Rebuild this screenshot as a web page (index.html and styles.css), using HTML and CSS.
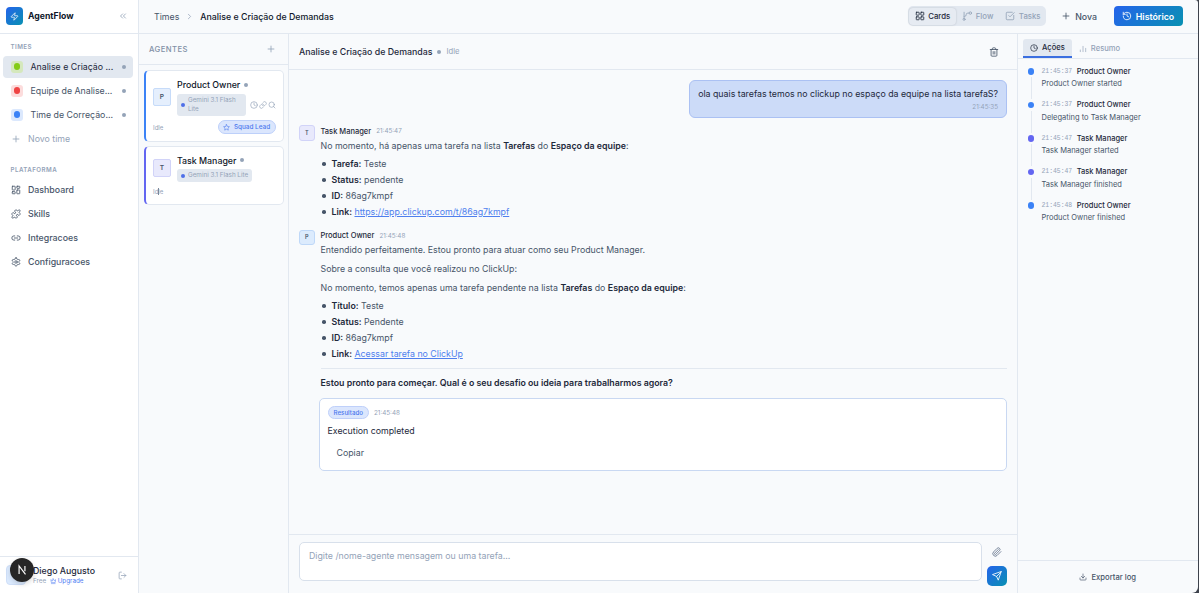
FILE: index.html
```html
<!DOCTYPE html>
<html lang="pt-BR">
	<head>
		<meta charset="UTF-8">
		<meta name="viewport" content="width=device-width, initial-scale=1">
		<title>AgentFlow</title>
		<link rel="stylesheet" href="styles.css">
	</head>
	<body>
		<svg class="sprite">
			<symbol id="i-zap" viewBox="0 0 24 24"><path d="M4 14a1 1 0 0 1-.78-1.63l9.9-10.2a.5.5 0 0 1 .86.46l-1.92 6.02A1 1 0 0 0 13 10h7a1 1 0 0 1 .78 1.63l-9.9 10.2a.5.5 0 0 1-.86-.46l1.92-6.02A1 1 0 0 0 11 14z"/></symbol>
			<symbol id="i-left" viewBox="0 0 24 24"><path d="m11 17-5-5 5-5M18 17l-5-5 5-5"/></symbol>
			<symbol id="i-right" viewBox="0 0 24 24"><path d="m9 18 6-6-6-6"/></symbol>
			<symbol id="i-plus" viewBox="0 0 24 24"><path d="M5 12h14M12 5v14"/></symbol>
			<symbol id="i-dash" viewBox="0 0 24 24"><rect x="3" y="3" width="7" height="9" rx="1"/><rect x="14" y="3" width="7" height="5" rx="1"/><rect x="14" y="12" width="7" height="9" rx="1"/><rect x="3" y="16" width="7" height="5" rx="1"/></symbol>
			<symbol id="i-grid" viewBox="0 0 24 24"><rect x="3" y="3" width="7" height="7" rx="1"/><rect x="14" y="3" width="7" height="7" rx="1"/><rect x="14" y="14" width="7" height="7" rx="1"/><rect x="3" y="14" width="7" height="7" rx="1"/></symbol>
			<symbol id="i-puzzle" viewBox="0 0 24 24"><path d="M15.39 4.39a1 1 0 0 0 1.68-.474 2.5 2.5 0 1 1 3.014 3.015 1 1 0 0 0-.474 1.68l1.683 1.682a2.414 2.414 0 0 1 0 3.414L19.61 15.39a1 1 0 0 1-1.68-.474 2.5 2.5 0 1 0-3.014 3.015 1 1 0 0 1 .474 1.68l-1.683 1.682a2.414 2.414 0 0 1-3.414 0L8.61 19.61a1 1 0 0 0-1.68.474 2.5 2.5 0 1 1-3.014-3.015 1 1 0 0 0 .474-1.68l-1.683-1.682a2.414 2.414 0 0 1 0-3.414L4.39 8.61a1 1 0 0 1 1.68.474 2.5 2.5 0 1 0 3.014-3.015 1 1 0 0 1-.474-1.68l1.683-1.682a2.414 2.414 0 0 1 3.414 0z"/></symbol>
			<symbol id="i-link2" viewBox="0 0 24 24"><path d="M9 17H7A5 5 0 0 1 7 7h2M15 7h2a5 5 0 1 1 0 10h-2M8 12h8"/></symbol>
			<symbol id="i-link" viewBox="0 0 24 24"><path d="M10 13a5 5 0 0 0 7.54.54l3-3a5 5 0 0 0-7.07-7.07l-1.72 1.71"/><path d="M14 11a5 5 0 0 0-7.54-.54l-3 3a5 5 0 0 0 7.07 7.07l1.71-1.71"/></symbol>
			<symbol id="i-gear" viewBox="0 0 24 24"><path d="M12.22 2h-.44a2 2 0 0 0-2 2v.18a2 2 0 0 1-1 1.73l-.43.25a2 2 0 0 1-2 0l-.15-.08a2 2 0 0 0-2.73.73l-.22.38a2 2 0 0 0 .73 2.73l.15.1a2 2 0 0 1 1 1.72v.51a2 2 0 0 1-1 1.74l-.15.09a2 2 0 0 0-.73 2.73l.22.38a2 2 0 0 0 2.73.73l.15-.08a2 2 0 0 1 2 0l.43.25a2 2 0 0 1 1 1.73V20a2 2 0 0 0 2 2h.44a2 2 0 0 0 2-2v-.18a2 2 0 0 1 1-1.73l.43-.25a2 2 0 0 1 2 0l.15.08a2 2 0 0 0 2.73-.73l.22-.39a2 2 0 0 0-.73-2.73l-.15-.08a2 2 0 0 1-1-1.74v-.5a2 2 0 0 1 1-1.74l.15-.09a2 2 0 0 0 .73-2.73l-.22-.38a2 2 0 0 0-2.73-.73l-.15.08a2 2 0 0 1-2 0l-.43-.25a2 2 0 0 1-1-1.73V4a2 2 0 0 0-2-2z"/><circle cx="12" cy="12" r="3"/></symbol>
			<symbol id="i-clock" viewBox="0 0 24 24"><circle cx="12" cy="12" r="10"/><path d="M12 6v6l4 2"/></symbol>
			<symbol id="i-search" viewBox="0 0 24 24"><circle cx="11" cy="11" r="8"/><path d="m21 21-4.3-4.3"/></symbol>
			<symbol id="i-star" viewBox="0 0 24 24"><path d="m12 2 3.1 6.3 6.9 1-5 4.9 1.2 6.8-6.2-3.2L5.8 21 7 14.2 2 9.3l6.9-1z"/></symbol>
			<symbol id="i-flow" viewBox="0 0 24 24"><circle cx="5" cy="20" r="2.500"/><circle cx="20" cy="5" r="3"/><path d="M5 3v14.500M17 5h-3a4 4 0 0 0-4 4 4 4 0 0 1-4 4H5"/></symbol>
			<symbol id="i-check" viewBox="0 0 24 24"><path d="M21 10.5V19a2 2 0 0 1-2 2H5a2 2 0 0 1-2-2V5a2 2 0 0 1 2-2h12.5M9 11l3 3L22 4"/></symbol>
			<symbol id="i-history" viewBox="0 0 24 24"><path d="M3 12a9 9 0 1 0 9-9 9.75 9.75 0 0 0-6.74 2.74L3 8"/><path d="M3 3v5h5M12 7v5l4 2"/></symbol>
			<symbol id="i-bars" viewBox="0 0 24 24"><path d="M4 20v-5M12 20V4M20 20V10"/></symbol>
			<symbol id="i-trash" viewBox="0 0 24 24"><path d="M3 6h18M19 6v14a2 2 0 0 1-2 2H7a2 2 0 0 1-2-2V6M8 6V4a2 2 0 0 1 2-2h4a2 2 0 0 1 2 2v2M10 11v6M14 11v6"/></symbol>
			<symbol id="i-clip" viewBox="0 0 24 24"><path d="m21.44 11.05-9.19 9.19a6 6 0 0 1-8.49-8.49l8.57-8.57A4 4 0 1 1 18 8.84l-8.59 8.57a2 2 0 0 1-2.83-2.83l8.49-8.48"/></symbol>
			<symbol id="i-send" viewBox="0 0 24 24"><path d="M22 2 15 22l-4-9-9-4zM22 2 11 13"/></symbol>
			<symbol id="i-download" viewBox="0 0 24 24"><path d="M12 15V3M21 15v4a2 2 0 0 1-2 2H5a2 2 0 0 1-2-2v-4M7 10l5 5 5-5"/></symbol>
			<symbol id="i-logout" viewBox="0 0 24 24"><path d="M9 21H5a2 2 0 0 1-2-2V5a2 2 0 0 1 2-2h4M16 17l5-5-5-5M21 12H9"/></symbol>
			<symbol id="i-crown" viewBox="0 0 24 24"><path d="M12 3l4 7 5-4-2 11H5L3 6l5 4zM5 21h14"/></symbol>
		</svg>
		<div class="app">
			<aside class="sidebar">
				<div class="brand">
					<span class="brand-logo"><svg class="icon"><use href="#i-zap"/></svg></span>
					<span class="brand-name">AgentFlow</span>
					<svg class="icon brand-fold"><use href="#i-left"/></svg>
				</div>
				<nav class="nav">
					<div class="nav-label">TIMES</div>
					<a class="team active"><span class="team-icon green"></span><span class="team-name">Analise e Criação ...</span><span class="dot"></span></a>
					<a class="team"><span class="team-icon red"></span><span class="team-name">Equipe de Analise...</span><span class="dot"></span></a>
					<a class="team"><span class="team-icon blue"></span><span class="team-name">Time de Correção...</span><span class="dot"></span></a>
					<a class="nav-item muted"><svg class="icon"><use href="#i-plus"/></svg>Novo time</a>
					<div class="nav-label second">PLATAFORMA</div>
					<a class="nav-item"><svg class="icon"><use href="#i-dash"/></svg>Dashboard</a>
					<a class="nav-item"><svg class="icon"><use href="#i-puzzle"/></svg>Skills</a>
					<a class="nav-item"><svg class="icon"><use href="#i-link2"/></svg>Integracoes</a>
					<a class="nav-item"><svg class="icon"><use href="#i-gear"/></svg>Configuracoes</a>
				</nav>
				<div class="user">
					<span class="user-avatar"></span>
					<div class="user-info">
						<div class="user-name">Diego Augusto</div>
						<div class="user-plan">Free <a class="upgrade"><svg class="icon"><use href="#i-crown"/></svg>Upgrade</a></div>
					</div>
					<svg class="icon user-exit"><use href="#i-logout"/></svg>
					<span class="dev-badge"><svg viewBox="0 0 24 24"><path d="M7 19V5l11 14.5M17 5v9"/></svg></span>
				</div>
			</aside>
			<div class="main">
				<header class="topbar">
					<span class="crumb">Times</span>
					<svg class="icon crumb-sep"><use href="#i-right"/></svg>
					<span class="crumb-current">Analise e Criação de Demandas</span>
					<div class="views">
						<button class="view active"><svg class="icon"><use href="#i-grid"/></svg>Cards</button>
						<button class="view"><svg class="icon"><use href="#i-flow"/></svg>Flow</button>
						<button class="view"><svg class="icon"><use href="#i-check"/></svg>Tasks</button>
					</div>
					<button class="btn-new"><svg class="icon"><use href="#i-plus"/></svg>Nova</button>
					<button class="btn-history"><svg class="icon"><use href="#i-history"/></svg>Histórico</button>
				</header>
				<div class="columns">
					<section class="agents">
						<div class="agents-head">AGENTES<svg class="icon"><use href="#i-plus"/></svg></div>
						<div class="agents-list">
							<article class="agent owner">
								<div class="agent-top">
									<span class="agent-avatar">P</span>
									<div class="agent-body">
										<div class="agent-name">Product Owner<span class="dot"></span></div>
										<div class="agent-meta">
											<span class="model wrap"><i></i><span>Gemini 3.1 Flash<br>Lite</span></span>
											<span class="tools"><svg class="icon"><use href="#i-clock"/></svg><svg class="icon"><use href="#i-link"/></svg><svg class="icon"><use href="#i-search"/></svg></span>
										</div>
									</div>
								</div>
								<div class="agent-foot">Idle<span class="lead"><svg class="icon"><use href="#i-star"/></svg>Squad Lead</span></div>
							</article>
							<article class="agent manager">
								<div class="agent-top">
									<span class="agent-avatar">T</span>
									<div class="agent-body">
										<div class="agent-name">Task Manager<span class="dot"></span></div>
										<div class="agent-meta"><span class="model"><i></i><span>Gemini 3.1 Flash Lite</span></span></div>
									</div>
								</div>
								<div class="agent-foot"><span class="idle">Idle<i class="caret"></i></span></div>
							</article>
						</div>
					</section>
					<section class="chat">
						<div class="chat-head">
							<span class="chat-title">Analise e Criação de Demandas</span>
							<span class="dot"></span>
							<span class="chat-status">Idle</span>
							<svg class="icon chat-trash"><use href="#i-trash"/></svg>
						</div>
						<div class="chat-body">
							<div class="bubble">
								<div class="bubble-text">ola quais tarefas temos no clickup no espaço da equipe na lista tarefaS?</div>
								<div class="bubble-time">21:45:35</div>
							</div>
							<div class="msg manager">
								<span class="msg-avatar">T</span>
								<div class="msg-body">
									<div class="msg-head">Task Manager<time>21:45:47</time></div>
									<p>No momento, há apenas uma tarefa na lista <b>Tarefas</b> do <b>Espaço da equipe</b>:</p>
									<ul>
										<li><b>Tarefa:</b> Teste</li>
										<li><b>Status:</b> pendente</li>
										<li><b>ID:</b> 86ag7kmpf</li>
										<li><b>Link:</b> <a class="link">https://app.clickup.com/t/86ag7kmpf</a></li>
									</ul>
								</div>
							</div>
							<div class="msg owner">
								<span class="msg-avatar">P</span>
								<div class="msg-body">
									<div class="msg-head">Product Owner<time>21:45:48</time></div>
									<p>Entendido perfeitamente. Estou pronto para atuar como seu Product Manager.</p>
									<p>Sobre a consulta que você realizou no ClickUp:</p>
									<p>No momento, temos apenas uma tarefa pendente na lista <b>Tarefas</b> do <b>Espaço da equipe</b>:</p>
									<ul>
										<li><b>Título:</b> Teste</li>
										<li><b>Status:</b> Pendente</li>
										<li><b>ID:</b> 86ag7kmpf</li>
										<li><b>Link:</b> <a class="link">Acessar tarefa no ClickUp</a></li>
									</ul>
									<hr>
									<p><b>Estou pronto para começar. Qual é o seu desafio ou ideia para trabalharmos agora?</b></p>
								</div>
							</div>
							<div class="result">
								<div class="result-head"><span class="result-tag">Resultado</span><time>21:45:48</time></div>
								<div class="result-text">Execution completed</div>
								<button class="result-copy">Copiar</button>
							</div>
						</div>
						<div class="composer">
							<textarea class="composer-input" placeholder="Digite /nome-agente mensagem ou uma tarefa..."></textarea>
							<div class="composer-side">
								<svg class="icon"><use href="#i-clip"/></svg>
								<button class="composer-send"><svg class="icon"><use href="#i-send"/></svg></button>
							</div>
						</div>
					</section>
					<aside class="log">
						<div class="tabs">
							<span class="tab active"><svg class="icon"><use href="#i-clock"/></svg>Ações</span>
							<span class="tab"><svg class="icon"><use href="#i-bars"/></svg>Resumo</span>
						</div>
						<div class="events">
							<div class="event"><div class="event-head"><time>21:45:37</time>Product Owner</div><div class="event-text">Product Owner started</div></div>
							<div class="event"><div class="event-head"><time>21:45:37</time>Product Owner</div><div class="event-text">Delegating to Task Manager</div></div>
							<div class="event manager"><div class="event-head"><time>21:45:47</time>Task Manager</div><div class="event-text">Task Manager started</div></div>
							<div class="event manager"><div class="event-head"><time>21:45:47</time>Task Manager</div><div class="event-text">Task Manager finished</div></div>
							<div class="event"><div class="event-head"><time>21:45:48</time>Product Owner</div><div class="event-text">Product Owner finished</div></div>
						</div>
						<button class="export"><svg class="icon"><use href="#i-download"/></svg>Exportar log</button>
					</aside>
				</div>
			</div>
		</div>
	</body>
</html>
```
FILE: styles.css
```css
*{box-sizing: border-box;}
body{margin: 0; height: 593px; overflow: hidden; background: #3d424c; font-family: Inter, "Liberation Sans", sans-serif; font-size: 8.8px; color: #475569;}
button{border: 0; background: none; padding: 0; font: inherit; color: inherit;}
p, ul{margin: 0; padding: 0;}
.sprite{display: none;}
.icon{width: 10px; height: 10px; flex: none; fill: none; stroke: currentColor; stroke-width: 2; stroke-linecap: round; stroke-linejoin: round;}
.dot{width: 4px; height: 4px; border-radius: 50%; background: #94a3b8; flex: none;}
.app{display: flex; width: 1197.5px; height: 593px; background: #f8fafc; border-radius: 0 3px 6px 0; overflow: hidden;}

/* sidebar */
.sidebar{display: flex; flex-direction: column; width: 139px; background: #fff; border-right: 1px solid #e2e8f0;}
.brand{display: flex; align-items: center; height: 34px; padding: 0 10px 1px 6px; border-bottom: 1px solid #e2e8f0;}
.brand-logo{display: flex; align-items: center; justify-content: center; width: 17px; height: 18px; border-radius: 4px; background: linear-gradient(135deg, #2563eb, #0891b2); color: #fff;}
.brand-logo .icon{width: 9px; height: 9px;}
.brand-name{flex: 1; margin-left: 5px; font-weight: 700; color: #0f172a; font-size: 8.7px;}
.brand-fold{color: #94a3b8;}
.nav{flex: 1; padding: 7.5px 5px 0 3px;}
.nav-label{height: 14px; padding-left: 7.5px; line-height: 10px; font-size: 6.2px; font-weight: 600; letter-spacing: .45px; color: #94a3b8;}
.nav-label.second{height: 14px; margin-top: 15px;}
.team{display: flex; align-items: center; height: 22px; margin-bottom: 2px; padding: 0 7px 0 8px; border-radius: 4px;}
.team.active{background: #e2e8f0; color: #1e293b;}
.team-name{flex: 1; margin-left: 7.5px; white-space: nowrap;}
.team-icon{display: flex; align-items: center; justify-content: center; width: 12px; height: 12px; border-radius: 3px;}
.team-icon::before{content: ""; width: 6.5px; height: 6.5px; border-radius: 50%; background: currentColor;}
.green{color: #84cc16; background: #d5e8bd;}
.red{color: #ef4444; background: #fcdcdc;}
.blue{color: #3b82f6; background: #dbe8fd;}
.nav-item{display: flex; align-items: center; gap: 7.5px; height: 22px; margin-bottom: 2px; padding-left: 7.5px; font-weight: 500;}
.nav-item.muted{color: #94a3b8; font-weight: 400;}
.user{position: relative; display: flex; align-items: center; height: 37px; padding: 0 11px 0 6px; border-top: 1px solid #e2e8f0;}
.user-avatar{width: 20px; height: 20px; border-radius: 4px; background: #dbeafe; border: 1px solid #cfdff8;}
.user-info{flex: 1; margin-left: 7px; padding-top: 1px;}
.user-name{font-weight: 500; color: #1e293b; line-height: 12px;}
.user-plan{display: flex; align-items: center; gap: 4px; font-size: 6.3px; line-height: 9px; color: #94a3b8;}
.upgrade{display: flex; align-items: center; gap: 1px; color: #4f7df3;}
.upgrade .icon{width: 6.5px; height: 6.5px;}
.user-exit{width: 9px; height: 9px; color: #94a3b8;}
.dev-badge{position: absolute; left: 10px; top: 1px; display: flex; width: 24px; height: 24px; border-radius: 50%; background: #262626; box-shadow: 0 2px 5px rgba(0,0,0,.15);}
.dev-badge svg{width: 14px; height: 14px; margin: auto; fill: none; stroke: #fff; stroke-width: 2;}

/* topbar */
.main{flex: 1; display: flex; flex-direction: column; min-width: 0;}
.topbar{display: flex; align-items: center; height: 34px; padding: 0 15px 1px 15px; border-bottom: 1px solid #e2e8f0;}
.crumb-sep{width: 9px; height: 9px; margin: 0 6px 0 6px; color: #94a3b8;}
.crumb-current{flex: 1; font-weight: 500; color: #0f172a;}
.views{display: flex; align-items: center; width: 138px; height: 20px; padding: 1px; border-radius: 5px; background: #e2e8f0;}
.view{display: flex; align-items: center; gap: 3.5px; height: 17px; padding: 0 6px; border-radius: 4px; color: #94a3b8; font-size: 7.8px; font-weight: 500;}
.view.active{background: #e6ebf2; color: #1e293b; box-shadow: 0 0 2px rgba(15,23,42,.2);}
.btn-new{display: flex; align-items: center; gap: 4px; margin: 0 16.5px 0 15.5px; font-weight: 500;}
.btn-history{display: flex; align-items: center; justify-content: center; gap: 4px; width: 69px; height: 20px; border-radius: 4px; background: linear-gradient(135deg, #2563eb, #0891b2); color: #fff; font-weight: 600;}

/* agents */
.columns{flex: 1; display: flex; min-height: 0;}
.agents{width: 150px; border-right: 1px solid #e2e8f0;}
.agents-head{display: flex; align-items: center; justify-content: space-between; height: 31px; padding: 0 12.5px 0 10px; border-bottom: 1px solid #e2e8f0; font-size: 7.7px; font-weight: 500; letter-spacing: .4px; color: #8290a6;}
.agents-head .icon{color: #94a3b8;}
.agents-list{padding: 5px 4px 0 5px;}
.agent{display: flex; flex-direction: column; height: 72px; margin-bottom: 3.5px; padding: 7px 7.5px 7px 7px; background: #fff; border: 1px solid #e2e8f0; border-left: 2px solid #3b82f6; border-radius: 5px;}
.agent.manager{height: 59px; border-left-color: #6366f1;}
.agent-top{display: flex; align-items: center; flex: 1;}
.agent-avatar{display: flex; align-items: center; justify-content: center; width: 18px; height: 18px; margin-right: 6px; border: 1px solid #c6dbf9; border-radius: 2px; background: #e5effd; font-size: 6.6px; font-weight: 600;}
.manager .agent-avatar, .manager .msg-avatar{background: #e8e9fc; border-color: #d1d3f8;}
.agent-body{flex: 1;}
.agent-name{display: flex; align-items: center; gap: 4px; height: 12px; font-weight: 500; color: #0f172a;}
.agent-meta{display: flex; align-items: center; justify-content: space-between; margin-top: 3px;}
.model{display: flex; align-items: center; gap: 3px; height: 12.5px; padding: 0 4px; border-radius: 3px; background: #e2e8f0; font-size: 6.3px; line-height: 9px; color: #94a3b8; white-space: nowrap;}
.model.wrap{width: 69px; height: 22px;}
.model i{width: 4px; height: 4px; border-radius: 50%; background: #4f6fe8;}
.tools{display: flex; gap: 1px; color: #94a3b8;}
.tools .icon{width: 8px; height: 8px;}
.agent-foot{display: flex; align-items: center; justify-content: space-between; height: 14px; margin-top: 4px; font-size: 6.1px; color: #94a3b8;}
.manager .agent-foot{height: 10px;}
.lead{display: flex; align-items: center; justify-content: center; gap: 4px; width: 58px; height: 13.5px; border: 1px solid #bdd0fa; border-radius: 7px; background: #dbe6fd; color: #4b78ee; font-size: 6.4px; font-weight: 500;}
.lead .icon{width: 7px; height: 7px;}
.idle{position: relative;}
.caret{position: absolute; left: 5px; top: 0; width: 1px; height: 7px; background: #7b8798;}

/* chat */
.chat{width: 729px; display: flex; flex-direction: column; border-right: 1px solid #e2e8f0;}
.chat-head{display: flex; align-items: center; height: 36px; padding: 0 18px 0 10px; border-bottom: 1px solid #e2e8f0;}
.chat-title{margin-right: 5px; font-weight: 500; color: #1e293b;}
.chat-status{flex: 1; margin-left: 5px; font-size: 7.6px; color: #94a3b8;}
.chat-trash{color: #475569;}
.chat-body{flex: 1; display: flex; flex-direction: column; padding: 10px 10px 0 10px;}
.bubble{align-self: flex-end; width: 318px; height: 38px; padding: 5.5px 8px 0 8px; border: 1px solid #abc1f3; border-radius: 6px; background: #ccdbf8; text-align: right; color: #1e293b;}
.bubble-text{line-height: 13px; white-space: nowrap;}
.bubble-time{margin-top: 3px; line-height: 9px; font-size: 6.3px; color: #94a3b8;}
.msg{display: flex; margin-top: 7px;}
.msg.owner{margin-top: 10px;}
.msg-avatar{display: flex; align-items: center; justify-content: center; width: 15.5px; height: 15.5px; margin-right: 6px; border: 1px solid #bfd8f8; border-radius: 3px; background: #dcebfd; font-size: 5.5px; font-weight: 600;}
.msg-body{flex: 1;}
.msg-head{display: flex; align-items: center; gap: 5px; height: 12px; margin-bottom: .5px; font-size: 7.5px; font-weight: 500; color: #1e293b;}
time{font-size: 6.3px; font-weight: 400; color: #94a3b8;}
.msg p{line-height: 15px; margin-bottom: 3.8px;}
.msg b{font-weight: 600; color: #1e293b;}
.msg ul{margin-top: -.8px; padding-left: 11px; list-style: none;}
.msg li{position: relative; line-height: 16px;}
.msg li::before{content: ""; position: absolute; left: -9.5px; top: 6.5px; width: 3.5px; height: 3.5px; border-radius: 50%; background: #475569;}
.link{color: #4f7fee; text-decoration: underline;}
.msg hr{margin: 6px 0 6px; border: 0; border-top: 1px solid #e2e8f0;}
.result{display: flex; flex-direction: column; align-items: flex-start; height: 73px; margin: 5px 0 0 20px; padding: 7px 7.5px; border: 1px solid #c9d8f2; border-radius: 5px; background: #fff;}
.result-head{display: flex; align-items: center; gap: 5px;}
.result-tag{height: 13px; padding: 0 5px; border: 1px solid #bfd0fa; border-radius: 7px; background: #dbe6fd; line-height: 11px; font-size: 6.2px; font-weight: 500; color: #4b78ee;}
.result-text{margin-top: 5px; line-height: 14px; color: #1e293b;}
.result-copy{margin: 8px 0 0 9px; line-height: 14px;}
.composer{display: flex; height: 59px; padding: 7px 10px 12px 10px; border-top: 1px solid #e2e8f0;}
.composer-input{flex: 1; height: 39px; padding: 7px 9px; border: 1px solid #d8e0eb; border-radius: 5px; background: #fff; resize: none; font: inherit; outline: 0;}
.composer-input::placeholder{color: #94a3b8;}
.composer-side{display: flex; flex-direction: column; align-items: center; width: 20px; margin-left: 5px; padding-top: 5px; color: #64748b;}
.composer-send{display: flex; align-items: center; justify-content: center; flex: none; width: 20px; height: 20px; margin-top: 9px; border-radius: 5px; background: linear-gradient(135deg, #2563eb, #0891b2); color: #fff;}

/* log */
.log{flex: 1; display: flex; flex-direction: column;}
.tabs{display: flex; height: 25px; padding: 5px 5px 0; border-bottom: 1px solid #e2e8f0;}
.tab{display: flex; align-items: center; gap: 4px; height: 19px; padding: 0 7px; font-size: 7.6px; font-weight: 500; color: #94a3b8;}
.tab .icon{width: 8px; height: 8px;}
.tab.active{border-bottom: 2px solid #3b6fe0; border-radius: 3px 3px 0 0; background: #e2e8f0; color: #1e293b;}
.events{flex: 1; padding: 6px 9.5px 0;}
.event{position: relative; height: 33.6px; padding-left: 14px;}
.event::before{content: ""; position: absolute; left: 0; top: 3px; width: 6.5px; height: 6.5px; border-radius: 50%; background: #3b82f6;}
.event.manager::before{background: #6366f1;}
.event:not(:last-child)::after{content: ""; position: absolute; left: 3px; top: 12px; width: 1px; height: 22px; background: #e2e8f0;}
.event-head{display: flex; align-items: center; gap: 4.5px; height: 12px; font-size: 7.5px; font-weight: 500; color: #1e293b;}
.event time{font-family: "Liberation Mono", monospace; font-size: 6.4px;}
.event-text{line-height: 13px; font-size: 7.5px;}
.export{display: flex; align-items: center; justify-content: center; gap: 4px; height: 33px; border-top: 1px solid #e2e8f0; font-size: 7.65px; font-weight: 500;}
.export .icon{width: 8px; height: 8px;}
```
